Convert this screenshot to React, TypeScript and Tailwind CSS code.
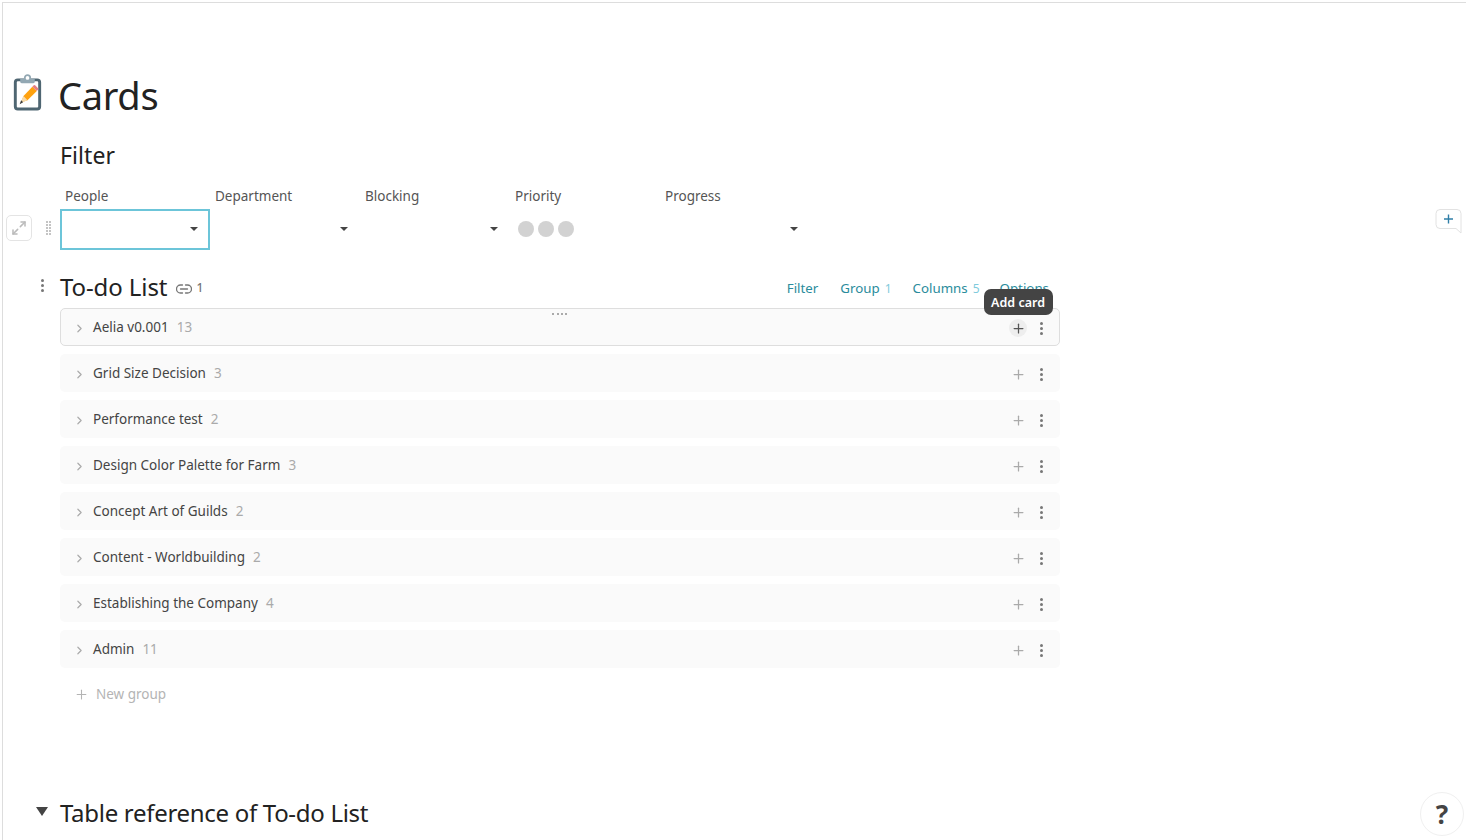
import { ChevronRight, Maximize2, Plus } from 'lucide-react'

const font = "font-['Noto_Sans','Open_Sans',sans-serif]"

const groups = [
  { name: 'Aelia v0.001', count: 13 },
  { name: 'Grid Size Decision', count: 3 },
  { name: 'Performance test', count: 2 },
  { name: 'Design Color Palette for Farm', count: 3 },
  { name: 'Concept Art of Guilds', count: 2 },
  { name: 'Content - Worldbuilding', count: 2 },
  { name: 'Establishing the Company', count: 4 },
  { name: 'Admin', count: 11 },
]

function Caret() {
  return <span className="block w-0 h-0 -mt-[1px] border-x-[4px] border-x-transparent border-t-[4px] border-t-[#444]" />
}

function Kebab({ color = 'bg-[#777]' }: { color?: string }) {
  return (
    <span className="flex flex-col gap-[2px] w-[3px]">
      <span className={`w-[3px] h-[3px] rounded-full ${color}`} />
      <span className={`w-[3px] h-[3px] rounded-full ${color}`} />
      <span className={`w-[3px] h-[3px] rounded-full ${color}`} />
    </span>
  )
}

function ClipboardIcon() {
  return (
    <svg width="30" height="37" viewBox="0 0 30 38" className="-mt-[6px]">
      <rect x="3" y="6" width="25" height="30" rx="2.5" fill="#fff" stroke="#4f6672" strokeWidth="3" />
      <path d="M8 5h15v3a1.5 1.5 0 0 1-1.5 1.5h-12A1.5 1.5 0 0 1 8 8z" fill="#93a8b3" />
      <circle cx="15.5" cy="4" r="2.8" fill="#fff" stroke="#93a8b3" strokeWidth="1.8" />
      <path d="M9 29l2.4-6.5L20.5 13l4.6 4.4L15.5 27z" fill="#ffa20f" />
      <path d="M20.5 13l1.4-1.4a1 1 0 0 1 1.4 0l3.1 3a1 1 0 0 1 0 1.4l-1.3 1.4z" fill="#e77f83" />
      <path d="M8 30l3.4-7.5 4.1 4.5z" fill="#f6d9a8" />
      <path d="M7.5 31L9 27l2 2z" fill="#3c3c3c" />
    </svg>
  )
}

function LinkIcon() {
  return (
    <svg width="16" height="10" viewBox="0 0 16 10" fill="none" stroke="#777" strokeWidth="1.3" strokeLinecap="round">
      <path d="M6.5 1H4.5a4 4 0 0 0 0 8h2" />
      <path d="M9.5 1h2a4 4 0 0 1 0 8h-2" />
      <path d="M4.5 5h7" />
    </svg>
  )
}

function CommentPlus() {
  return (
    <svg width="27" height="25" viewBox="0 0 27 25" fill="none">
      <path
        d="M5 .5h17a4 4 0 0 1 4 4V24l-5-4.5H5a4 4 0 0 1-4-4v-11a4 4 0 0 1 4-4z"
        stroke="#e2e2e2"
        fill="#fff"
      />
      <path d="M13.5 5.5v9M9 10h9" stroke="#2f7fa8" strokeWidth="1.4" />
    </svg>
  )
}

function GroupRow({ name, count, active }: { name: string; count: number; active: boolean }) {
  return (
    <div
      className={`relative flex items-center h-[38px] rounded-[5px] bg-[#fafafa] pl-[12px] pr-[16px] border ${
        active ? 'border-[#dedede]' : 'border-transparent'
      }`}
    >
      <ChevronRight size={13} strokeWidth={2.2} className="text-[#aaa] mt-[3px] shrink-0" />
      <span className="ml-[7px] text-[13.5px] text-[#444]">{name}</span>
      <span className="ml-[8px] text-[13.5px] text-[#aaa]">{count}</span>
      <span className="ml-auto mt-[2px] flex items-center">
        <span
          className={`flex items-center justify-center w-[18px] h-[18px] rounded-full ${
            active ? 'bg-[#eeeeee] text-[#555]' : 'text-[#aaa]'
          }`}
        >
          <Plus size={15} strokeWidth={2} />
        </span>
        <span className="ml-[13px]">
          <Kebab />
        </span>
      </span>
      {active && (
        <>
          <span className="absolute left-[491px] top-[4px] w-[15px] border-t-2 border-dotted border-[#aaa]" />
          <span className="absolute right-[6px] -top-[20px] h-[26px] pl-[7px] pr-[8px] rounded-[7px] bg-[#444] text-white text-[12.5px] font-semibold leading-[27px] whitespace-nowrap">
            Add card
          </span>
        </>
      )}
    </div>
  )
}

function ToolbarItem({ label, count, className = '' }: { label: string; count?: number; className?: string }) {
  return (
    <span className={`text-[13.3px] text-[#2a8c9c] whitespace-nowrap ${className}`}>
      {label}
      {count !== undefined && <span className="ml-[5px] text-[12px] text-[#7fcbdc]">{count}</span>}
    </span>
  )
}

export default function App() {
  return (
    <div className={`${font} h-[840px] overflow-hidden bg-white pt-[2px] pl-[2px] text-[#222]`}>
      <div className="relative h-full border-t border-l border-[#dddddd]">
        {/* Title */}
        <div className="flex items-center pl-[9px] pt-[67px]">
          <ClipboardIcon />
          <h1 className="ml-[16px] text-[38px] leading-[50px] tracking-[-0.3px]">Cards</h1>
        </div>

        {/* Filter */}
        <div className="pl-[57px] pt-[20px]">
          <h2 className="text-[23px] leading-[30px] tracking-[0.1px]">Filter</h2>
          <div className="relative mt-[16px] flex">
            <div className="w-[150px]">
              <p className="pl-[5px] text-[13.5px] leading-[20px] text-[#555]">People</p>
              <div className="mt-[3px] flex items-center justify-end h-[41px] border-2 border-[#6cc5d9] pr-[10px]">
                <Caret />
              </div>
            </div>
            {['Department', 'Blocking'].map((label) => (
              <div key={label} className="w-[150px]">
                <p className="pl-[5px] text-[13.5px] leading-[20px] text-[#555]">{label}</p>
                <div className="mt-[3px] flex items-center justify-end h-[41px] pr-[12px]">
                  <Caret />
                </div>
              </div>
            ))}
            <div className="w-[150px]">
              <p className="pl-[5px] text-[13.5px] leading-[20px] text-[#555]">Priority</p>
              <div className="mt-[3px] flex items-center gap-[4px] h-[39px] pl-[8px]">
                <span className="w-4 h-4 rounded-full bg-[#d2d2d2]" />
                <span className="w-4 h-4 rounded-full bg-[#d2d2d2]" />
                <span className="w-4 h-4 rounded-full bg-[#d2d2d2]" />
              </div>
            </div>
            <div className="w-[150px]">
              <p className="pl-[5px] text-[13.5px] leading-[20px] text-[#555]">Progress</p>
              <div className="mt-[3px] flex items-center justify-end h-[41px] pr-[12px]">
                <Caret />
              </div>
            </div>
            {/* row handles sit in the gutter */}
            <span className="absolute -left-[54px] top-[29px] flex items-center justify-center w-[26px] h-[26px] rounded-[5px] border border-[#e4e4e4] text-[#bbb]">
              <Maximize2 size={16} strokeWidth={2.3} />
            </span>
            <span className="absolute -left-[14px] top-[35px] grid grid-cols-2 gap-[1px]">
              {[0, 1, 2, 3, 4, 5, 6, 7, 8, 9].map((i) => (
                <span key={i} className="w-[2px] h-[2px] bg-[#c4c4c4]" />
              ))}
            </span>
          </div>
        </div>

        {/* To-do List */}
        <div className="relative ml-[57px] w-[1000px] mt-[19px]">
          <span className="absolute -left-[19px] top-[10px]">
            <Kebab />
          </span>
          <div className="flex items-center h-[38px]">
            <h2 className="-mt-[2px] text-[24px] leading-[36px] tracking-[-0.1px]">To-do List</h2>
            <span className="ml-[9px] mt-[1px]">
              <LinkIcon />
            </span>
            <span className="ml-[4px] text-[12px] font-medium text-[#777]">1</span>
            <div className="ml-auto mt-[2px] flex items-center gap-[21px] pr-[11px]">
              <ToolbarItem label="Filter" className="mr-[1px]" />
              <ToolbarItem label="Group" count={1} />
              <ToolbarItem label="Columns" count={5} />
              <ToolbarItem label="Options" className="-ml-[1px]" />
            </div>
          </div>
          <div className="mt-[1px] flex flex-col gap-[8px]">
            {groups.map((g, i) => (
              <GroupRow key={g.name} name={g.name} count={g.count} active={i === 0} />
            ))}
          </div>
          <div className="flex items-center h-[34px] mt-[9px] pl-[14px] text-[#b4b4b4]">
            <Plus size={15} strokeWidth={1.7} />
            <span className="ml-[7px] text-[13.5px]">New group</span>
          </div>
        </div>

        {/* Table reference */}
        <div className="relative ml-[57px] mt-[84px] flex items-center">
          <span className="absolute -left-[24px] top-[12px] w-0 h-0 border-x-[6px] border-x-transparent border-t-[9px] border-t-[#444]" />
          <h2 className="text-[24px] leading-[36px] tracking-[-0.3px]">Table reference of To-do List</h2>
        </div>

        {/* Floating buttons */}
        <span className="absolute right-[4px] top-[206px]">
          <CommentPlus />
        </span>
        <span className="absolute right-[2px] top-[789px] flex items-center justify-center w-[44px] h-[44px] rounded-full border border-[#f0f0f0] bg-white text-[26px] font-bold leading-none text-[#444]">
          ?
        </span>
      </div>
    </div>
  )
}
